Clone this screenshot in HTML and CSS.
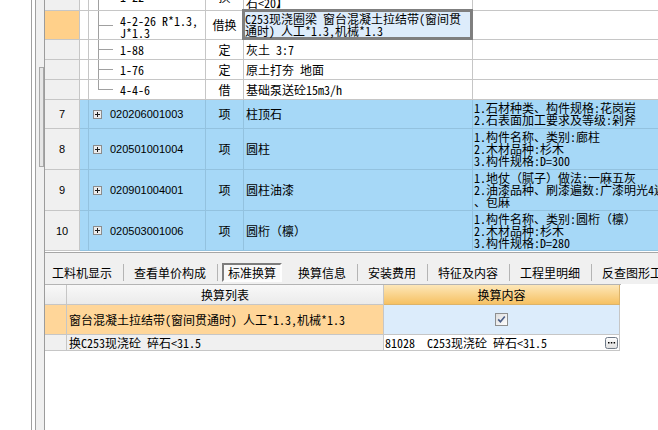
FILE: index.html
```html
<!DOCTYPE html>
<html>
<head>
<meta charset="utf-8">
<link rel="stylesheet" href="styles.css">
</head>
<body>
<div class="app">
  <div class="edge"></div>
  <div class="rail"></div>
  <div class="gutter"><div class="thumb"></div></div>
  <div class="main">
    <div class="ugrid">
      <div class="urows">
        <div class="row h28">
          <div class="c w-h"></div><div class="c w-e"></div>
          <div class="c w-code"><span class="tree"></span><span>1-22</span></div>
          <div class="c w-unit">换</div>
          <div class="c w-name"><div>换为【C20现浇砼 碎<br>石&lt;20】</div></div>
          <div class="c w-feat"></div>
        </div>
        <div class="row h29">
          <div class="c w-h cur"></div><div class="c w-e"></div>
          <div class="c w-code"><span class="tree"></span><span class="two">4-2-26 R*1.3,<br>J*1.3</span></div>
          <div class="c w-unit">借换</div>
          <div class="c w-name edit"><div class="editbox">C253现浇圈梁 窗台混凝土拉结带(窗间贯<br>通时) 人工*1.3,机械*1.3</div></div>
          <div class="c w-feat"></div>
        </div>
        <div class="row h20">
          <div class="c w-h"></div><div class="c w-e"></div>
          <div class="c w-code"><span class="tree"></span><span>1-88</span></div>
          <div class="c w-unit">定</div>
          <div class="c w-name">灰土 3:7</div>
          <div class="c w-feat"></div>
        </div>
        <div class="row h20">
          <div class="c w-h"></div><div class="c w-e"></div>
          <div class="c w-code"><span class="tree"></span><span>1-76</span></div>
          <div class="c w-unit">定</div>
          <div class="c w-name">原土打夯 地面</div>
          <div class="c w-feat"></div>
        </div>
        <div class="row h20">
          <div class="c w-h"></div><div class="c w-e"></div>
          <div class="c w-code"><span class="tree last"></span><span>4-4-6</span></div>
          <div class="c w-unit">借</div>
          <div class="c w-name">基础泵送砼15m3/h</div>
          <div class="c w-feat"></div>
        </div>
        <div class="row h29 blue">
          <div class="c w-h num">7</div><div class="c w-e"></div>
          <div class="c w-code"><svg class="exp" width="9" height="9" viewBox="0 0 9 9"><rect x="0.5" y="0.5" width="8" height="8" fill="#ececec" stroke="#8c8c8c"/><path d="M2 4.5h5M4.5 2v5" stroke="#1a1a1a"/></svg><span class="num">020206001003</span></div>
          <div class="c w-unit">项</div>
          <div class="c w-name">柱顶石</div>
          <div class="c w-feat"><div>1.石材种类、构件规格:花岗岩<br>2.石表面加工要求及等级:剁斧</div></div>
        </div>
        <div class="row h41 blue">
          <div class="c w-h num">8</div><div class="c w-e"></div>
          <div class="c w-code"><svg class="exp" width="9" height="9" viewBox="0 0 9 9"><rect x="0.5" y="0.5" width="8" height="8" fill="#ececec" stroke="#8c8c8c"/><path d="M2 4.5h5M4.5 2v5" stroke="#1a1a1a"/></svg><span class="num">020501001004</span></div>
          <div class="c w-unit">项</div>
          <div class="c w-name">圆柱</div>
          <div class="c w-feat"><div>1.构件名称、类别:廊柱<br>2.木材品种:杉木<br>3.构件规格:D=300</div></div>
        </div>
        <div class="row h41 blue">
          <div class="c w-h num">9</div><div class="c w-e"></div>
          <div class="c w-code"><svg class="exp" width="9" height="9" viewBox="0 0 9 9"><rect x="0.5" y="0.5" width="8" height="8" fill="#ececec" stroke="#8c8c8c"/><path d="M2 4.5h5M4.5 2v5" stroke="#1a1a1a"/></svg><span class="num">020901004001</span></div>
          <div class="c w-unit">项</div>
          <div class="c w-name">圆柱油漆</div>
          <div class="c w-feat"><div>1.地仗（腻子）做法:一麻五灰<br>2.油漆品种、刷漆遍数:广漆明光4遍<br>、包麻</div></div>
        </div>
        <div class="row h40 blue">
          <div class="c w-h num">10</div><div class="c w-e"></div>
          <div class="c w-code"><svg class="exp" width="9" height="9" viewBox="0 0 9 9"><rect x="0.5" y="0.5" width="8" height="8" fill="#ececec" stroke="#8c8c8c"/><path d="M2 4.5h5M4.5 2v5" stroke="#1a1a1a"/></svg><span class="num">020503001006</span></div>
          <div class="c w-unit">项</div>
          <div class="c w-name">圆桁（檩）</div>
          <div class="c w-feat"><div>1.构件名称、类别:圆桁（檩）<br>2.木材品种:杉木<br>3.构件规格:D=280</div></div>
        </div>
      </div>
    </div>
    <div class="tabs">
      <span class="tab">工料机显示</span><span class="sep"></span>
      <span class="tab">查看单价构成</span><span class="sep"></span>
      <span class="tab sel">标准换算</span><span class="sep hid"></span>
      <span class="tab">换算信息</span><span class="sep"></span>
      <span class="tab">安装费用</span><span class="sep"></span>
      <span class="tab">特征及内容</span><span class="sep"></span>
      <span class="tab">工程里明细</span><span class="sep"></span>
      <span class="tab">反查图形工程量</span>
    </div>
    <div class="lower">
      <div class="lgrid">
        <div class="lrow lhead">
          <div class="lc l-h"></div>
          <div class="lc l-a">换算列表</div>
          <div class="lc l-b">换算内容</div>
        </div>
        <div class="lrow lr1">
          <div class="lc l-h"></div>
          <div class="lc l-a">窗台混凝土拉结带(窗间贯通时) 人工*1.3,机械*1.3</div>
          <div class="lc l-b"><svg class="chk" width="13" height="13" viewBox="0 0 13 13"><defs><linearGradient id="cg" x1="0" y1="0" x2="1" y2="1"><stop offset="0" stop-color="#dcdcdc"/><stop offset="1" stop-color="#ffffff"/></linearGradient></defs><rect x="0.5" y="0.5" width="12" height="12" fill="url(#cg)" stroke="#8e8f8f"/><path d="M3.2 6.4l2.2 2.4l4.4-5.4" fill="none" stroke="#4a5d86" stroke-width="1.6"/></svg></div>
        </div>
        <div class="lrow lr2">
          <div class="lc l-h"></div>
          <div class="lc l-a">换C253现浇砼 碎石&lt;31.5</div>
          <div class="lc l-b"><span>81028&nbsp; C253现浇砼 碎石&lt;31.5</span><svg class="dots" width="13" height="12" viewBox="0 0 13 12"><defs><linearGradient id="bg" x1="0" y1="0" x2="0" y2="1"><stop offset="0" stop-color="#ffffff"/><stop offset="1" stop-color="#dedede"/></linearGradient></defs><rect x="0.5" y="0.5" width="12" height="11" rx="2" fill="url(#bg)" stroke="#6f7a88"/><rect x="3" y="5" width="1.5" height="1.5" fill="#000"/><rect x="5.8" y="5" width="1.5" height="1.5" fill="#000"/><rect x="8.6" y="5" width="1.5" height="1.5" fill="#000"/></svg></div>
        </div>
      </div>
    </div>
  </div>
</div>
</body>
</html>
```

FILE: styles.css
```css
* { box-sizing: border-box; }
html, body { margin: 0; padding: 0; }
body {
  width: 658px;
  height: 430px;
  overflow: hidden;
  background: #ffffff;
  color: #000;
  font-family: "Noto Sans CJK SC", sans-serif;
  font-size: 12px;
}
.app { display: flex; height: 430px; }
.edge { width: 31px; flex: none; }
.rail {
  width: 5px; flex: none;
  border-left: 1px solid #a0a0a0;
  border-right: 1px solid #a0a0a0;
}
.gutter {
  width: 8px; flex: none;
  background: #f0f0f0;
  padding: 67px 0 0 3px;
}
.thumb {
  width: 5px; height: 100px;
  border: 1px solid #a8a8a8;
  background: #e6e6e6;
}
.main {
  flex: none;
  width: 614px;
  border-left: 1px solid #9c9c9c;
  display: flex;
  flex-direction: column;
  background: #f0f0f0;
}

/* upper grid */
.ugrid {
  flex: none;
  height: 253px;
  overflow: hidden;
  background: #fff;
  border-bottom: 1px solid #a6a6a6;
  font-family: "Noto Sans Mono CJK SC", "Noto Sans CJK SC", monospace;
}
.urows { margin-top: -17px; }
.row { display: flex; }
.h20 { height: 20px; }
.h28 { height: 28px; }
.h29 { height: 29px; }
.h40 { height: 40px; }
.h41 { height: 41px; }
.c {
  flex: none;
  display: flex;
  align-items: center;
  border-right: 1px solid #c6c6c6;
  border-bottom: 1px solid #c6c6c6;
  overflow: hidden;
  white-space: nowrap;
  line-height: 12px;
}
.w-h { width: 35px; justify-content: center; background: #f0f0f0; }
.w-h.cur { background: #ffd08a; }
.w-e { width: 9px; }
.w-code { width: 117px; }
.w-unit { width: 38px; justify-content: center; }
.w-name { width: 229px; padding-left: 2px; }
.w-feat { width: 200px; padding-left: 1px; }
.tree {
  align-self: stretch;
  flex: none;
  width: 15px;
  margin: 0 7px 0 9px;
  background:
    linear-gradient(#a0a0a0, #a0a0a0) 0 0 / 1px 100% no-repeat,
    linear-gradient(#a0a0a0, #a0a0a0) 0 50% / 100% 1px no-repeat;
}
.tree.last {
  background:
    linear-gradient(#a0a0a0, #a0a0a0) 0 0 / 1px 50% no-repeat,
    linear-gradient(#a0a0a0, #a0a0a0) 0 50% / 100% 1px no-repeat;
}
.two { padding-top: 3px; }
.edit { overflow: visible; padding: 0; align-items: stretch; }
.editbox {
  flex: 1;
  margin: -2px -1px -1px -2px;
  border: 3px solid #7f7f7f;
  background: #ddecfb;
  padding-top: 1px;
  line-height: 12px;
}
.blue .c { background: #a6d8f7; border-color: #93c2df; }
.blue .c.w-h { background: #f0f0f0; border-color: #c6c6c6; }
.num { font-family: "Liberation Sans", sans-serif; font-size: 11px; }
.exp { flex: none; margin: 0 8px 0 4px; display: block; }

/* tabs */
.tabs {
  flex: none;
  height: 31px;
  display: flex;
  align-items: flex-start;
  padding: 10px 0 0 1px;
  background: #f0f0f0;
  white-space: nowrap;
  overflow: hidden;
}
.tab {
  flex: none;
  height: 19px;
  line-height: 17px;
  padding: 0 5px;
  border: 1px solid transparent;
}
.tab.sel {
  border: 2px solid;
  border-color: #7c7c7c #fdfdfd #fdfdfd #7c7c7c;
  padding: 0 4px;
  line-height: 15px;
  background: #f7f7f7;
}
.sep {
  flex: none;
  width: 1px;
  height: 17px;
  margin: 1px 4px 0 5px;
  background: #b4b4b4;
}
.sep.hid { visibility: hidden; }

/* lower grid */
.lower { flex: 1; background: #fff; }
.lgrid {
  width: 576px;
  border-top: 1px solid #b4b4b4;
  font-family: "Noto Sans Mono CJK SC", "Noto Sans CJK SC", monospace;
}
.lrow { display: flex; }
.lc {
  flex: none;
  display: flex;
  align-items: center;
  border-right: 1px solid #c6c6c6;
  border-bottom: 1px solid #c6c6c6;
  white-space: nowrap;
  overflow: hidden;
  line-height: 12px;
}
.l-h { width: 22px; }
.l-a { width: 317px; padding-left: 2px; }
.l-b { width: 236px; padding-left: 1px; }
.lhead { height: 20px; }
.lhead .lc {
  justify-content: center;
  padding: 0;
  background: linear-gradient(#f8f8f8, #ebebeb);
  font-family: "Noto Sans CJK SC", sans-serif;
}
.lhead .l-b {
  background: linear-gradient(#fde7b8, #f6c163);
  border-color: #dcb36a;
}
.lr1 { height: 30px; }
.lr1 .l-h, .lr1 .l-a { background: #ffd699; }
.lr1 .l-b { background: #dcecfb; justify-content: center; padding: 0; }
.chk { display: block; }
.lr2 { height: 16px; }
.lr2 .l-h, .lr2 .l-a { background: #f0f0f0; }
.lr2 .l-b { justify-content: space-between; padding-right: 1px; }
.dots { display: block; flex: none; }
```
